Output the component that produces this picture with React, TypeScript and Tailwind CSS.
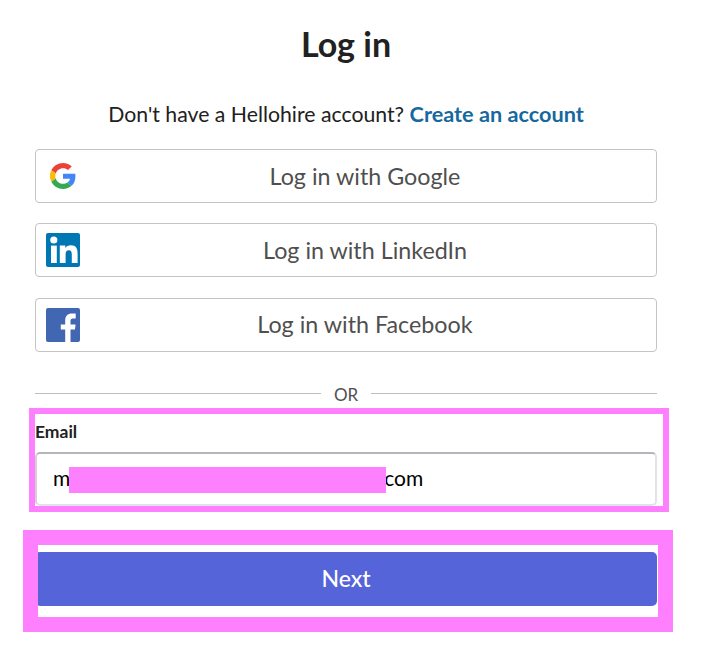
const GoogleIcon = () => (
  <svg width="26" height="26" viewBox="0 0 48 48">
    <path fill="#EA4335" d="M24 9.5c3.54 0 6.71 1.22 9.21 3.6l6.85-6.85C35.9 2.38 30.47 0 24 0 14.62 0 6.51 5.38 2.56 13.22l7.98 6.19C12.43 13.72 17.74 9.5 24 9.5z" />
    <path fill="#4285F4" d="M46.98 24.55c0-1.57-.15-3.09-.38-4.55H24v9.02h12.94c-.58 2.96-2.26 5.48-4.78 7.18l7.73 6c4.51-4.18 7.09-10.36 7.09-17.65z" />
    <path fill="#FBBC05" d="M10.53 28.59c-.48-1.45-.76-2.99-.76-4.59s.27-3.14.76-4.59l-7.98-6.19C.92 16.46 0 20.12 0 24c0 3.88.92 7.54 2.56 10.78l7.97-6.19z" />
    <path fill="#34A853" d="M24 48c6.48 0 11.93-2.13 15.89-5.81l-7.73-6c-2.15 1.45-4.92 2.3-8.16 2.3-6.26 0-11.57-4.22-13.47-9.91l-7.98 6.19C6.51 42.62 14.62 48 24 48z" />
  </svg>
);

const LinkedInIcon = () => (
  <svg width="34" height="34" viewBox="0 0 34 34">
    <rect width="34" height="34" rx="2" fill="#0077B5" />
    <circle cx="7.8" cy="7" r="3.6" fill="#fff" />
    <rect x="5" y="12.6" width="5.8" height="17.4" fill="#fff" />
    <path fill="#fff" d="M13.8 12.6h5.5v2.5c.9-1.6 2.9-2.9 5.6-2.9 5.2 0 6.7 3.2 6.7 8.2V30h-5.8v-8.4c0-2.4-.5-4.4-3-4.4-2.6 0-3.2 2-3.2 4.3V30h-5.8z" />
  </svg>
);

const FacebookIcon = () => (
  <svg width="34" height="34" viewBox="0 0 34 34">
    <rect width="34" height="34" rx="2" fill="#4267B2" />
    <path fill="#fff" d="M24.5 34V21.6h4.4l.7-5.1h-5.1v-3.6c0-1.5.4-2.5 2.5-2.5h2.7V5.6c-.5-.1-2.1-.2-3.9-.2-3.9 0-6.6 2.4-6.6 6.8v4.3h-4.4v5.1h4.4V34z" />
  </svg>
);

const providers = [
  { name: "Google", icon: <GoogleIcon />, iconClass: "left-[14px]" },
  { name: "LinkedIn", icon: <LinkedInIcon />, iconClass: "left-[10px]" },
  { name: "Facebook", icon: <FacebookIcon />, iconClass: "left-[10px]" },
];

export default function App() {
  return (
    <div className="relative h-[655px] w-[727px] overflow-hidden bg-white font-['Lato',sans-serif] text-[#212121]">
      <div className="ml-[35px] flex w-[622px] flex-col">
        <h1 className="mt-[21px] text-center text-[34px] font-bold leading-[46px]">Log in</h1>

        <p className="mt-[32px] text-center text-[21.25px] leading-[30px]">
          Don't have a Hellohire account?{" "}
          <a className="text-[21.7px] font-bold text-[#16689e]">Create an account</a>
        </p>

        <div className="mt-[20px] flex flex-col gap-[20.4px]">
          {providers.map((p) => (
            <button
              key={p.name}
              className="relative flex h-[54px] items-center justify-center rounded-[4px] border border-[#c4c4c4] bg-white pl-[38px] text-[23.3px] text-[#4f4f4f]"
            >
              <span className={`absolute top-1/2 -translate-y-1/2 ${p.iconClass}`}>{p.icon}</span>
              Log in with {p.name}
            </button>
          ))}
        </div>

        <div className="mt-[31px] flex items-center gap-[13px]">
          <div className="h-px flex-1 bg-[#bdbdbd]" />
          <span className="translate-y-px text-[17px] leading-[22px] text-[#4f4f4f]">OR</span>
          <div className="h-px flex-1 bg-[#bdbdbd]" />
        </div>

        <label className="mt-[16px] text-[17.5px] font-bold leading-[22px]">Email</label>
        <div className="mt-[9px] flex h-[54px] items-center rounded-[5px] border-2 border-[#e2e2e8] border-t-[#b5b5bb] border-l-[#d2d2d6] bg-white pb-[2px] pl-[16px] text-[21px] text-black">
          <span>m</span>
          <span className="h-[26px] w-[314px] shrink-0" />
          <span>com</span>
        </div>

        <button className="mt-[46px] h-[54px] w-full rounded-[5px] bg-[#5564d9] pb-[2px] text-[23px] font-medium text-white">
          Next
        </button>
      </div>

      {/* redaction marks lying over the form */}
      <div className="absolute left-[29px] top-[408px] h-[104px] w-[640px] border-[6px] border-[#ff80ff]" />
      <div className="absolute left-[69px] top-[467px] h-[26px] w-[317px] bg-[#ff80ff]" />
      <div className="absolute left-[23px] top-[530px] h-[102px] w-[650px] border-[15px] border-[#ff80ff]" />
    </div>
  );
}
